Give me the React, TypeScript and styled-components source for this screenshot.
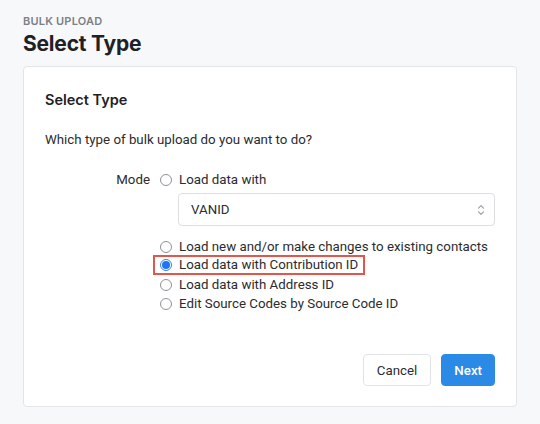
import React from 'react';
import styled, { createGlobalStyle } from 'styled-components';

const GlobalStyle = createGlobalStyle`
  html, body {
    margin: 0;
    padding: 0;
    background: #f7f8fa;
    font-family: Roboto, "Noto Sans", sans-serif;
    color: #222;
  }
`;

const Page = styled.div`
  width: 540px;
  height: 424px;
  padding: 15px 23px 0;
  box-sizing: border-box;
`;

const Eyebrow = styled.div`
  font-family: Inter, sans-serif;
  font-size: 11px;
  font-weight: 600;
  letter-spacing: 0.2px;
  color: #7d8086;
  text-transform: uppercase;
  line-height: 13px;
`;

const Title = styled.h1`
  margin: 3px 0 0;
  font-family: Inter, sans-serif;
  font-size: 21px;
  font-weight: 700;
  line-height: 26px;
  color: #1f2124;
  letter-spacing: -0.2px;
`;

const Card = styled.div`
  margin-top: 9px;
  height: 341px;
  box-sizing: border-box;
  background: #fff;
  border: 1px solid #e3e5e8;
  border-radius: 4px;
  padding: 24px 21px 20px;
  display: flex;
  flex-direction: column;
`;

const CardTitle = styled.h2`
  margin: 0;
  font-family: Inter, sans-serif;
  font-size: 14.5px;
  font-weight: 600;
  line-height: 18px;
  color: #1f2124;
`;

const Question = styled.p`
  margin: 22px 0 0;
  font-size: 13.3px;
  line-height: 18px;
  color: #2a2c30;
`;

const Form = styled.div`
  margin-top: 21px;
  display: grid;
  grid-template-columns: 105px 1fr;
  column-gap: 10px;
`;

const Label = styled.div`
  font-size: 13.3px;
  line-height: 19px;
  text-align: right;
  color: #2a2c30;
`;

const Options = styled.div`
  display: flex;
  flex-direction: column;
`;

const Option = styled.label<{ $highlight?: boolean }>`
  display: flex;
  align-items: center;
  gap: 7px;
  font-size: 13.3px;
  line-height: ${(p) => (p.$highlight ? '16px' : '19px')};
  color: #2a2c30;
  width: fit-content;
  white-space: nowrap;
  margin: ${(p) => (p.$highlight ? '-1px 0 0 -7px' : '0')};
  padding: ${(p) => (p.$highlight ? '0 5px' : '0')};
  border: ${(p) => (p.$highlight ? '2px solid #e2574c' : 'none')};
  position: relative;
  z-index: ${(p) => (p.$highlight ? 1 : 0)};
`;

const Radio = styled.span<{ $checked?: boolean }>`
  width: 12px;
  height: 12px;
  border-radius: 50%;
  box-sizing: border-box;
  flex-shrink: 0;
  background: #fff;
  border: ${(p) => (p.$checked ? '1px solid #2f7ef6' : '1px solid #8e9196')};
  display: flex;
  align-items: center;
  justify-content: center;
  &::after {
    content: '';
    display: ${(p) => (p.$checked ? 'block' : 'none')};
    width: 8px;
    height: 8px;
    border-radius: 50%;
    background: #1f74f0;
  }
`;

const Select = styled.div`
  margin: 4px 0 11px 18px;
  width: 317px;
  height: 33px;
  box-sizing: border-box;
  border: 1px solid #dcdee2;
  border-radius: 4px;
  background: #fff;
  display: flex;
  align-items: center;
  justify-content: space-between;
  padding: 0 9px 0 12px;
  font-size: 13.3px;
  color: #2a2c30;
`;

const Chevrons = () => (
  <svg width="8" height="12" viewBox="0 0 8 12" fill="none" stroke="#9a9ca1" strokeWidth="1.1" strokeLinecap="round" strokeLinejoin="round">
    <path d="M1.5 4.2 L4 1.7 L6.5 4.2" />
    <path d="M1.5 7.8 L4 10.3 L6.5 7.8" />
  </svg>
);

const Footer = styled.div`
  margin-top: auto;
  display: flex;
  justify-content: flex-end;
  gap: 10px;
`;

const Button = styled.button<{ $primary?: boolean }>`
  height: 32px;
  padding: 0 ${(p) => (p.$primary ? '12px' : '13px')};
  border-radius: 4px;
  font-family: inherit;
  font-size: 13.3px;
  border: 1px solid ${(p) => (p.$primary ? '#2a8ae6' : '#e1e3e6')};
  background: ${(p) => (p.$primary ? '#2a8ae6' : '#fff')};
  color: ${(p) => (p.$primary ? '#fff' : '#2a2c30')};
  font-weight: ${(p) => (p.$primary ? 500 : 400)};
`;

export default function App() {
  return (
    <>
      <GlobalStyle />
      <Page>
        <Eyebrow>Bulk Upload</Eyebrow>
        <Title>Select Type</Title>
        <Card>
          <CardTitle>Select Type</CardTitle>
          <Question>Which type of bulk upload do you want to do?</Question>
          <Form>
            <Label>Mode</Label>
            <Options>
              <Option>
                <Radio />
                Load data with
              </Option>
              <Select>
                VANID
                <Chevrons />
              </Select>
              <Option>
                <Radio />
                Load new and/or make changes to existing contacts
              </Option>
              <Option $highlight>
                <Radio $checked />
                Load data with Contribution ID
              </Option>
              <Option>
                <Radio />
                Load data with Address ID
              </Option>
              <Option>
                <Radio />
                Edit Source Codes by Source Code ID
              </Option>
            </Options>
          </Form>
          <Footer>
            <Button>Cancel</Button>
            <Button $primary>Next</Button>
          </Footer>
        </Card>
      </Page>
    </>
  );
}
